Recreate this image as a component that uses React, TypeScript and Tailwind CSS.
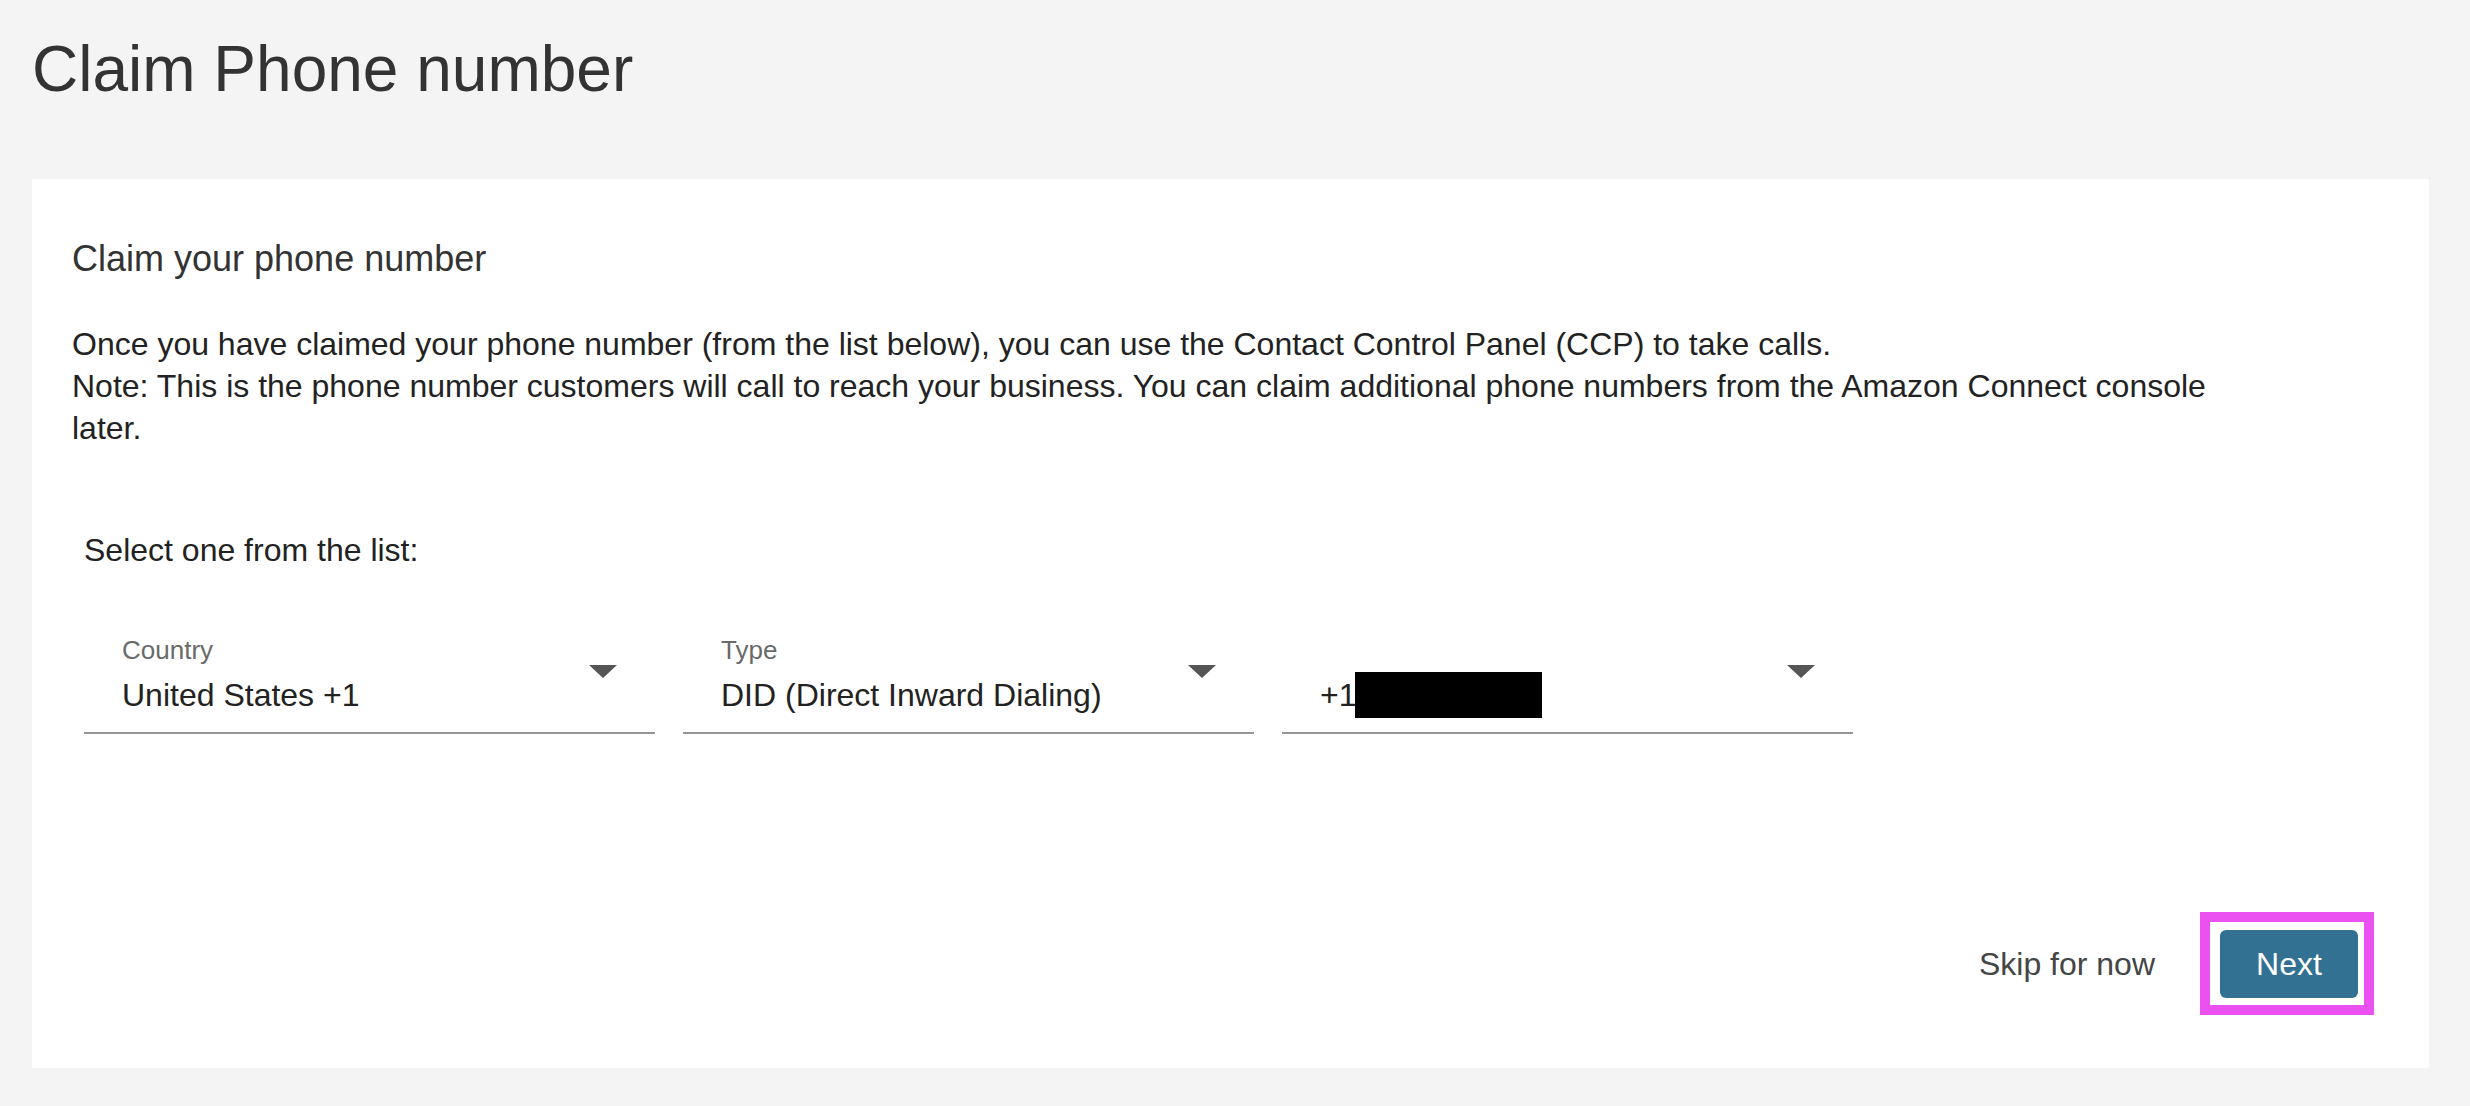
import React from "react";

function Arrow() {
  return (
    <svg width="28" height="13" viewBox="0 0 28 13" className="shrink-0 mt-[32px] mr-[38px]">
      <polygon points="0,0 28,0 14,13" fill="#555555" />
    </svg>
  );
}

function Field({ label, children }: { label?: string; children: React.ReactNode }) {
  return (
    <div className="w-[571px] flex border-b-2 border-[#959595] pb-[16px]">
      <div className="flex-1 pl-[38px]">
        <div className="h-[34px] leading-[34px] text-[26px] text-[#6a6a6a]">{label ?? "\u00a0"}</div>
        <div className="mt-[7px] h-[42px] leading-[42px] text-[32px] text-[#222] flex items-center">{children}</div>
      </div>
      <Arrow />
    </div>
  );
}

export default function App() {
  return (
    <div
      className="min-h-screen bg-[#f4f4f4] pl-[32px] pr-[41px] pt-[37px] pb-[38px]"
      style={{ fontFamily: '"Liberation Sans", Arial, Helvetica, sans-serif' }}
    >
      <h1 className="text-[64px] leading-[64px] text-[#333] font-normal">Claim Phone number</h1>
      <div className="mt-[78px] bg-white rounded-[2px] pl-[40px] pr-[55px] pt-[58px] pb-[53px]">
        <h2 className="text-[36px] leading-[44px] text-[#333]">Claim your phone number</h2>
        <div className="mt-[42px] w-[2170px] text-[32px] leading-[42px] text-[#222]">
          <p>Once you have claimed your phone number (from the list below), you can use the Contact Control Panel (CCP) to take calls.</p>
          <p>
            Note: This is the phone number customers will call to reach your business. You can claim additional phone numbers from the Amazon Connect console later.
          </p>
        </div>
        <div className="mt-[80px] pl-[12px]">
          <div className="text-[32px] leading-[42px] text-[#222]">Select one from the list:</div>
          <div className="mt-[62px] flex gap-[28px]">
            <Field label="Country">United States +1</Field>
            <Field label="Type">DID (Direct Inward Dialing)</Field>
            <Field>
              <span>+1</span>
              <span className="-ml-[1px] inline-block w-[187px] h-[46px] bg-black" />
            </Field>
          </div>
        </div>
        <div className="mt-[178px] flex items-center justify-end gap-[45px]">
          <span className="text-[32px] text-[#454545]">Skip for now</span>
          <div className="border-[10px] border-[#eb50f1] pl-[10px] pr-[6px] pt-[8px] pb-[7px]">
            <button className="block w-[138px] h-[68px] rounded-[6px] bg-[#337193] text-white text-[32px] leading-[68px] text-center">
              Next
            </button>
          </div>
        </div>
      </div>
    </div>
  );
}
